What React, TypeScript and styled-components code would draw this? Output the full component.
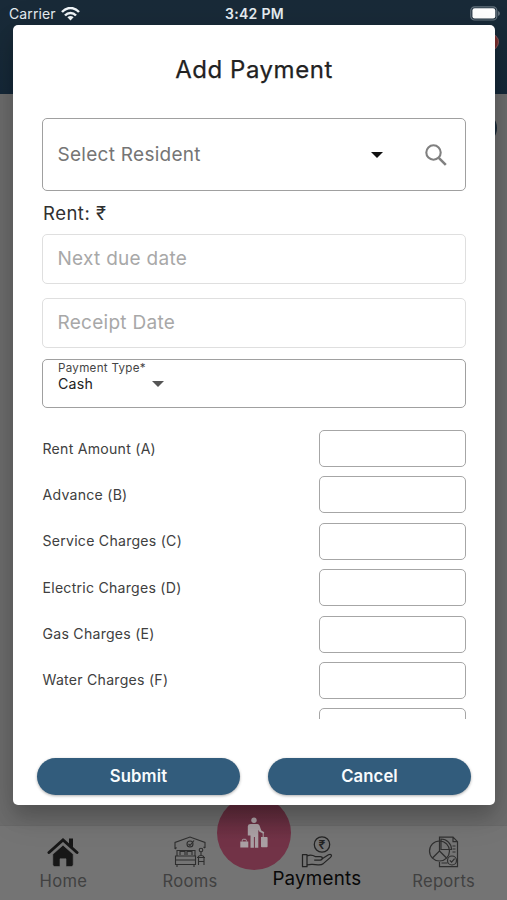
import React from "react";
import styled, { createGlobalStyle } from "styled-components";

const GlobalStyle = createGlobalStyle`
  * { box-sizing: border-box; }
  html, body { margin: 0; padding: 0; }
  body { font-family: Inter, "Liberation Sans", sans-serif; overflow: hidden; }
`;

const Screen = styled.div`
  position: relative;
  display: flex;
  flex-direction: column;
  width: 507px;
  height: 900px;
  overflow: hidden;
  background: #6c6c6c;
`;

const Header = styled.header`
  flex: 0 0 94px;
  background: linear-gradient(#192a38, #182a38 50%, #152838);
`;

const StatusBar = styled.div`
  display: grid;
  grid-template-columns: 1fr auto 1fr;
  align-items: center;
  height: 27px;
  padding: 0 7px 0 9px;
  color: #e6edf2;
  font-size: 14px;
  line-height: 20px;
`;

const Carrier = styled.div`
  display: flex;
  align-items: center;
  gap: 5px;
  letter-spacing: 0.12px;
`;

const Clock = styled.div`
  font-weight: 600;
  font-size: 14px;
  letter-spacing: 0.3px;
`;

const BatterySlot = styled.div`
  display: flex;
  justify-content: flex-end;
`;

const Content = styled.main`
  flex: 1;
`;

const Badge = styled.span`
  position: absolute;
  left: 480px;
  top: 33px;
  width: 19px;
  height: 18px;
  border-radius: 50%;
  background: #7a2d2c;
  border: 1px solid #87575a;
`;

const AddButton = styled.span`
  position: absolute;
  left: 466px;
  top: 112px;
  width: 31px;
  height: 32px;
  border-radius: 50%;
  background: #192a38;
`;

const TabBar = styled.nav`
  display: grid;
  grid-template-columns: repeat(4, 1fr);
  flex: 0 0 75px;
  background: #747474;
  border-top: 1px solid #696969;
`;

const Tab = styled.div<{ $active?: boolean }>`
  display: flex;
  flex-direction: column;
  align-items: center;
  padding: 10px 0 0;
  color: ${(p) => (p.$active ? "#080808" : "#414141")};
  font-size: ${(p) => (p.$active ? "18.8px" : "16.6px")};
  letter-spacing: ${(p) => (p.$active ? "0.22px" : "0.3px")};
  line-height: 24px;

  svg {
    display: block;
    margin-bottom: ${(p) => (p.$active ? "-1px" : "1px")};
  }
`;

const Fab = styled.div`
  position: absolute;
  left: 217px;
  top: 796px;
  width: 74px;
  height: 74px;
  border-radius: 50%;
  background: linear-gradient(#5d2a3a 10%, #723347 60%);
  display: flex;
  align-items: center;
  justify-content: center;
`;

const Dialog = styled.section`
  position: absolute;
  left: 13px;
  top: 25px;
  width: 482px;
  height: 780px;
  display: flex;
  flex-direction: column;
  background: #fff;
  border-radius: 5px;
  box-shadow: 0 12px 18px rgba(0, 0, 0, 0.16), 0 8px 36px 2px rgba(0, 0, 0, 0.12);
`;

const Title = styled.h1`
  flex: 0 0 93px;
  margin: 0;
  padding-top: 29px;
  text-align: center;
  color: #222;
  font-size: 24px;
  line-height: 32px;
  font-weight: 400;
  -webkit-text-stroke: 0.25px #222;
  letter-spacing: 0.55px;
`;

const Form = styled.div`
  flex: 0 0 601px;
  overflow: hidden;
  padding: 0 29px;
`;

const Outlined = styled.div<{ $height: number; $faint?: boolean; $gap: number }>`
  display: flex;
  align-items: center;
  height: ${(p) => p.$height}px;
  margin-bottom: ${(p) => p.$gap}px;
  padding: 0 18px ${(p) => (p.$faint ? "1px" : "0")} 14.5px;
  border: 1px solid ${(p) => (p.$faint ? "#dfdfdf" : "#a0a0a0")};
  border-radius: 5px;
  color: ${(p) => (p.$faint ? "#a8a8a8" : "#757575")};
  font-size: 19px;
  letter-spacing: 0.28px;
`;

const Grow = styled.span`
  flex: 1;
`;

const SearchSlot = styled.span`
  display: flex;
  margin-left: 42px;
`;

const Rent = styled.div`
  height: 42px;
  padding: 7px 0 0 1px;
  color: #303030;
  font-size: 18.5px;
  line-height: 28px;
  letter-spacing: 0.5px;
`;

const TypeField = styled.div`
  height: 49px;
  margin-bottom: 22px;
  padding: 1px 15px;
  border: 1px solid #a0a0a0;
  border-radius: 5px;
`;

const TypeLabel = styled.div`
  color: #454545;
  font-size: 11.6px;
  line-height: 15px;
  letter-spacing: 0.3px;
`;

const TypeValue = styled.div`
  display: flex;
  align-items: center;
  justify-content: space-between;
  width: 106px;
  color: #222;
  font-size: 14.2px;
  line-height: 15px;
  letter-spacing: 0.2px;
`;

const AmountRow = styled.label`
  display: flex;
  align-items: center;
  justify-content: space-between;
  height: 37px;
  margin-bottom: 9.4px;
  color: #404040;
  font-size: 14.1px;
  letter-spacing: 0.25px;
`;

const AmountLabel = styled.span`
  padding: 0 0 1px 0.5px;
`;

const AmountInput = styled.input`
  width: 147px;
  height: 37px;
  border: 1px solid #a6a6a6;
  border-radius: 5px;
  background: #fff;
  outline: 0;
`;

const Actions = styled.div`
  display: grid;
  grid-template-columns: 1fr 1fr;
  gap: 28px;
  padding: 39px 24px 0;
`;

const Action = styled.button`
  height: 37px;
  padding: 0 0 1px;
  border: 0;
  border-radius: 19px;
  background: #325c7c;
  box-shadow: 0 1px 3px rgba(0, 0, 0, 0.32);
  color: #f8fbfd;
  font-family: inherit;
  font-size: 16.7px;
  font-weight: 600;
  letter-spacing: 0.1px;
`;

const WifiIcon = () => (
  <svg width="19" height="14" viewBox="0 0 19 14" fill="none" stroke="#f1f6f9" strokeWidth="2.5">
    <path d="M1 5C6-.3 13-.3 18 5" />
    <path d="M4 8.5C7 5.3 12 5.3 15 8.5" />
    <path d="M9.5 13.5 6.4 10.3Q9.5 7.8 12.6 10.3Z" fill="#f1f6f9" stroke="none" />
  </svg>
);

const BatteryIcon = () => (
  <svg width="30" height="15" viewBox="0 0 30 15">
    <rect x=".8" y=".8" width="26" height="13.2" rx="3.8" fill="none" stroke="#66747f" strokeWidth="1.2" />
    <rect x="2.4" y="2.3" width="22.9" height="10.2" rx="2.2" fill="#fff" />
    <path d="M28 5v5q2-.8 2-2.5T28 5Z" fill="#61707a" />
  </svg>
);

const Caret = ({ color }: { color: string }) => (
  <svg width="12" height="6" viewBox="0 0 12 6">
    <path d="M0 0h12L6 6Z" fill={color} />
  </svg>
);

const SearchIcon = () => (
  <svg width="22" height="22" viewBox="0 0 22 22" fill="none" stroke="#808080" strokeWidth="2.1">
    <circle cx="8.5" cy="8.5" r="7.2" />
    <path d="m13.8 13.8 7 7" strokeWidth="2.6" />
  </svg>
);

const HomeIcon = () => (
  <svg width="32" height="32" viewBox="0 0 32 32">
    <path d="M2 16.5 16 4 30 16.5" fill="none" stroke="#171717" strokeWidth="3" strokeLinecap="round" />
    <path d="M22 2.5h4v9l-4-3.6Z" fill="#171717" />
    <path d="M5.8 18.2 16 9.2l10.2 9v10.4q0 2-2 2H19v-7.8h-6v7.8H7.8q-2 0-2-2Z" fill="#171717" stroke="#747474" strokeWidth=".6" />
  </svg>
);

const RoomsIcon = () => (
  <svg width="32" height="32" viewBox="0 0 32 32" fill="none" stroke="#2e2e2e" strokeWidth="1.1">
    <path d="M1 13V6.5L16 1l15 5.5V12M1 13l1.5-1.5M31 12l-1.5-1" />
    <circle cx="16" cy="8" r="3" />
    <path d="m14.5 8 1.5 1.5 4-5M3 20v-5.5h18V20M6 19v-3.5h5V19M13 19v-3.5h5V19M1.5 20h20v8.5h-20ZM1.5 24h20M3 28.5V31M20 28.5V31" />
    <circle cx="27" cy="14" r="1.8" />
    <path d="M27 15.8v4M24.2 21.5q0-2 2.8-2t2.8 2M23 21.5h8M24.5 21.5V29M30 21.5V29M24.5 25.5H30" />
  </svg>
);

const PaymentsIcon = () => (
  <svg width="32" height="32" viewBox="0 0 32 32" fill="none" stroke="#232323" strokeWidth="1.25" strokeLinejoin="round">
    <circle cx="21" cy="8.5" r="7.7" />
    <text x="21" y="12.8" fill="#232323" stroke="none" textAnchor="middle" fontSize="12" fontWeight="600">₹</text>
    <path d="M1.5 18.5H6v12.2H1.5ZM6 20c3-1.5 5.5-1.2 8.2.5h5c2.8 0 2.8 3.5 0 3.5h-6M21.2 22.8l6.3-4c2.5-1.3 4.1.8 2 2.6l-7 6c-1.6 1.3-3.2 1.7-5.5 1.5l-5.5-.6q-3-.2-5.5.7" />
  </svg>
);

const ReportsIcon = () => (
  <svg width="32" height="32" viewBox="0 0 32 32" fill="none" stroke="#2f2f2f" strokeWidth="1.2">
    <path d="M11.5 5V1.2H25l4.5 4.5v25h-18V26M25 1.2v4.5h4.5" />
    <circle cx="11.5" cy="15" r="10" />
    <path d="M11.5 5v10l-7 7M11.5 15l7 7M13 13.5h10.5A10.5 10.5 0 0 0 13 3ZM24.5 10h3M24.5 13h3M24.5 16h3M13.5 27h6" />
    <circle cx="24" cy="24.5" r="4.5" />
    <path d="m21.8 24.3 1.8 1.8 3-3.5" />
  </svg>
);

const TravelerIcon = () => (
  <svg width="28" height="32" viewBox="0 0 28 32" fill="#aaa0a4">
    <circle cx="14" cy="3.3" r="2.7" />
    <path d="M10.5 7h7q1.5 0 2 1.6l1.8 4.8 3 1.8-.8 1.5-4-2-1.2-2v18h-3.4V20h-1v10.7h-3.4V18.5H7.8V9.3Q8 7 10.5 7Z" />
    <path d="M23.2 14.8v5.5M21 20h5.8q.8 0 .8.8v8.8q0 .7-.8.7h-5q-.8 0-.8-.8ZM.3 24.5h8v6h-8Z" />
    <path d="M2.3 24.5v-1.2q0-1 1-1h2q1 0 1 1v1.2M23.2 15v5" fill="none" stroke="#aaa0a4" strokeWidth="1" />
  </svg>
);

const CHARGES = [
  "Rent Amount (A)",
  "Advance (B)",
  "Service Charges (C)",
  "Electric Charges (D)",
  "Gas Charges (E)",
  "Water Charges (F)",
  "",
];

export default function App() {
  return (
    <Screen>
      <GlobalStyle />
      <Header>
        <StatusBar>
          <Carrier>Carrier <WifiIcon /></Carrier>
          <Clock>3:42 PM</Clock>
          <BatterySlot><BatteryIcon /></BatterySlot>
        </StatusBar>
        <Badge />
      </Header>
      <Content><AddButton /></Content>
      <TabBar>
        <Tab><HomeIcon />Home</Tab>
        <Tab><RoomsIcon />Rooms</Tab>
        <Tab $active><PaymentsIcon />Payments</Tab>
        <Tab><ReportsIcon />Reports</Tab>
      </TabBar>
      <Fab><TravelerIcon /></Fab>
      <Dialog>
        <Title>Add Payment</Title>
        <Form>
          <Outlined $height={73} $gap={1}>
            <Grow>Select Resident</Grow>
            <Caret color="#111" />
            <SearchSlot><SearchIcon /></SearchSlot>
          </Outlined>
          <Rent>Rent: ₹</Rent>
          <Outlined $height={50} $gap={14} $faint>Next due date</Outlined>
          <Outlined $height={50} $gap={11} $faint>Receipt Date</Outlined>
          <TypeField>
            <TypeLabel>Payment Type*</TypeLabel>
            <TypeValue>Cash <Caret color="#555" /></TypeValue>
          </TypeField>
          {CHARGES.map((label, i) => (
            <AmountRow key={i}>
              <AmountLabel>{label}</AmountLabel>
              <AmountInput />
            </AmountRow>
          ))}
        </Form>
        <Actions>
          <Action>Submit</Action>
          <Action>Cancel</Action>
        </Actions>
      </Dialog>
    </Screen>
  );
}
